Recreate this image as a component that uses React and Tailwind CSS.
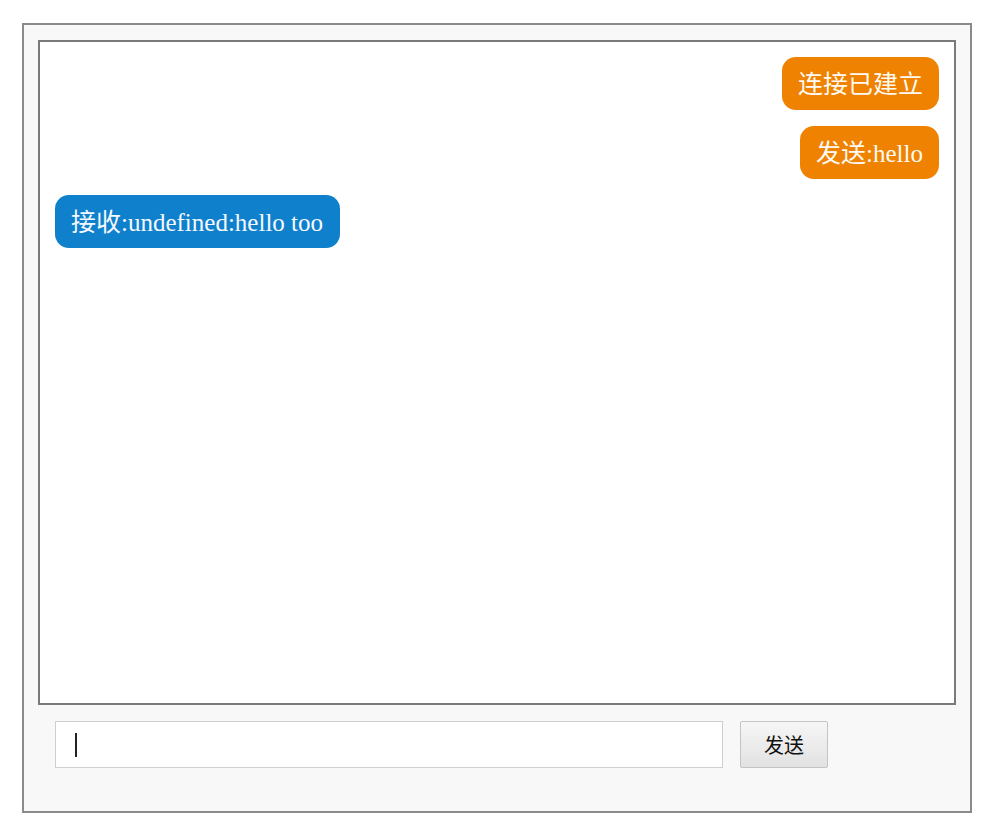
import React from "react";

const messages = [
  { side: "right", text: "连接已建立" },
  { side: "right", text: "发送:hello" },
  { side: "left", text: "接收:undefined:hello too" },
];

export default function App() {
  return (
    <div className="min-h-screen bg-white pt-[23px] pl-[22px]">
      <div className="w-[950px] h-[790px] border-2 border-[#8a8a8a] bg-[#f8f8f8] pt-[15px] px-[14px] flex flex-col">
        <div className="h-[665px] border-2 border-[#7a7a7a] bg-white px-[15px] pt-[15px] flex flex-col gap-4 [font-family:'Liberation_Serif','Noto_Sans_CJK_SC',serif]">
          {messages.map((m, idx) => (
            <div key={idx} className={m.side === "right" ? "flex justify-end" : "flex justify-start"}>
              <div
                className={
                  m.side === "right"
                    ? "bg-[#ef8200] text-[#fffaf3] text-[25px] leading-[33px] px-4 pt-[11px] pb-[9px] rounded-[14px]"
                    : "bg-[#0f80cc] text-[#f5f9ff] text-[25px] leading-[33px] pl-4 pr-[17px] pt-[11px] pb-[9px] rounded-[14px]"
                }
              >
                {m.text}
              </div>
            </div>
          ))}
        </div>
        <div className="flex items-center mt-[16px] pl-[17px]">
          <div className="w-[668px] h-[47px] border border-[#cfcfcf] bg-white flex items-center pl-[19px]">
            <div className="w-[2px] h-[24px] bg-[#222]"></div>
          </div>
          <button className="ml-[17px] w-[88px] h-[47px] border border-[#c4c4c4] rounded-[2px] bg-gradient-to-b from-[#f6f6f6] to-[#e2e2e2] text-[20px] text-[#111] [font-family:'Noto_Sans_CJK_SC',sans-serif]">
            发送
          </button>
        </div>
      </div>
    </div>
  );
}
